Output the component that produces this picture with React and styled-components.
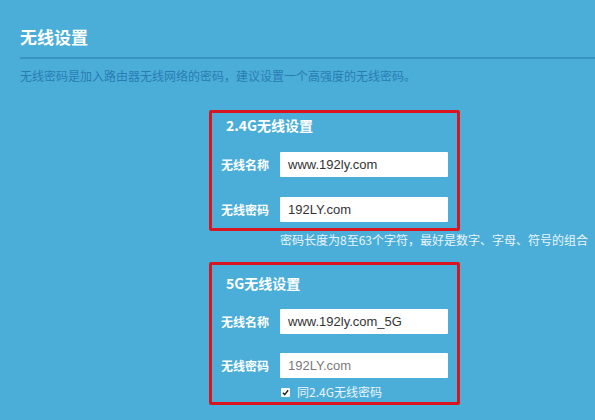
import React from "react";
import styled, { createGlobalStyle } from "styled-components";

const GlobalStyle = createGlobalStyle`
  html, body {
    margin: 0;
    padding: 0;
    background: #4aaed9;
  }
  body {
    font-family: "Noto Sans CJK SC", "Noto Sans", sans-serif;
  }
`;

const Page = styled.div`
  width: 595px;
  height: 420px;
  overflow: hidden;
  background: #4aaed9;
  padding: 26px 0 0 20px;
  box-sizing: border-box;
`;

const Title = styled.h1`
  margin: 0;
  padding-bottom: 9px;
  border-bottom: 2px solid #3a93c3;
  font-size: 17px;
  line-height: 22px;
  font-weight: 700;
  color: #ffffff;
`;

const Desc = styled.p`
  margin: 8px 0 0;
  font-size: 12px;
  line-height: 18px;
  color: #2a7cb2;
`;

const Column = styled.div`
  margin-left: 189px;
  width: 251px;
  display: flex;
  flex-direction: column;
`;

const Box = styled.section`
  border: 3px solid #d9161f;
  border-radius: 2px;
  margin-top: ${(p) => p.$top}px;
  padding: ${(p) => p.$padTop}px 0 ${(p) => p.$padBottom}px 9px;
  display: flex;
  flex-direction: column;
`;

const BoxTitle = styled.h2`
  margin: 0 0 0 5px;
  font-size: 14px;
  line-height: 20px;
  font-weight: 700;
  color: #ffffff;
`;

const Row = styled.div`
  display: flex;
  align-items: center;
  gap: 11px;
  margin-top: ${(p) => p.$gap}px;
`;

const Label = styled.span`
  width: 48px;
  font-size: 12px;
  font-weight: 700;
  color: #ffffff;
  white-space: nowrap;
`;

const Input = styled.div`
  width: 168px;
  height: 25px;
  box-sizing: border-box;
  background: #ffffff;
  border-radius: 1px;
  padding-left: 8px;
  display: flex;
  align-items: center;
  font-family: "Liberation Sans", "Noto Sans", sans-serif;
  font-size: 13px;
  color: ${(p) => (p.$muted ? "#7a7a7a" : "#333333")};
`;

const Hint = styled.p`
  margin: 0 0 0 71px;
  width: 320px;
  font-size: 12px;
  line-height: 18px;
  color: #eaf5fb;
  white-space: nowrap;
`;

const CheckRow = styled.label`
  display: flex;
  align-items: center;
  gap: 7px;
  margin: 5px 0 0 60px;
  font-size: 12px;
  line-height: 18px;
  color: #eaf5fb;
`;

const Check = styled.span`
  width: 9px;
  height: 9px;
  background: #ffffff;
  border-radius: 1px;
  display: inline-flex;
  align-items: center;
  justify-content: center;
`;

const Field = ({ label, value, muted, gap }) => (
  <Row $gap={gap}>
    <Label>{label}</Label>
    <Input $muted={muted}>{value}</Input>
  </Row>
);

export default function App() {
  return (
    <>
      <GlobalStyle />
      <Page>
        <Title>无线设置</Title>
        <Desc>无线密码是加入路由器无线网络的密码，建议设置一个高强度的无线密码。</Desc>
        <Column>
          <Box $top={25} $padTop={2} $padBottom={6}>
            <BoxTitle>2.4G无线设置</BoxTitle>
            <Field gap={17} label="无线名称" value="www.192ly.com" />
            <Field gap={20} label="无线密码" value="192LY.com" />
          </Box>
          <Hint>密码长度为8至63个字符，最好是数字、字母、符号的组合</Hint>
          <Box $top={13} $padTop={8} $padBottom={1}>
            <BoxTitle>5G无线设置</BoxTitle>
            <Field gap={16} label="无线名称" value="www.192ly.com_5G" />
            <Field gap={19} label="无线密码" value="192LY.com" muted />
            <CheckRow>
              <Check>
                <svg width="7" height="7" viewBox="0 0 8 8">
                  <path d="M1 4.2 L3.1 6.4 L7 1.4" fill="none" stroke="#222" strokeWidth="1.6" />
                </svg>
              </Check>
              同2.4G无线密码
            </CheckRow>
          </Box>
        </Column>
      </Page>
    </>
  );
}
